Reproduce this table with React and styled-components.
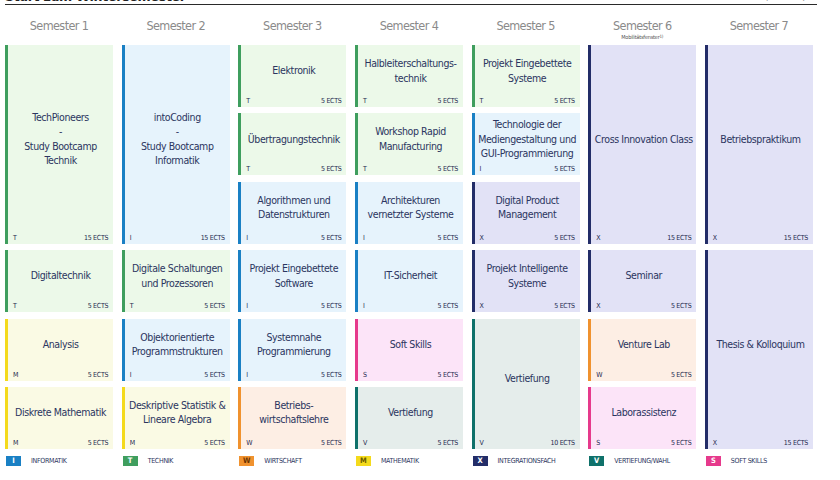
import React from "react";
import styled, { createGlobalStyle } from "styled-components";

const FONT = `"DejaVu Sans Condensed", "DejaVu Sans", "Liberation Sans", sans-serif`;

const GlobalStyle = createGlobalStyle`
  html, body { margin: 0; padding: 0; background: #ffffff; }
  body { font-family: ${FONT}; color: #2b3560; }
  * { box-sizing: border-box; }
`;

const CATS = {
  I: { border: "#1a80c4", bg: "#e6f3fc", label: "INFORMATIK", fg: "#ffffff" },
  T: { border: "#3f9e5e", bg: "#ecf9e9", label: "TECHNIK", fg: "#ffffff" },
  W: { border: "#f0922f", bg: "#fdeee4", label: "WIRTSCHAFT", fg: "#6a3300" },
  M: { border: "#f4da1c", bg: "#fafae4", label: "MATHEMATIK", fg: "#6a5a00" },
  X: { border: "#232d68", bg: "#e2e2f6", label: "INTEGRATIONSFACH", fg: "#ffffff" },
  V: { border: "#0f716a", bg: "#e5edeb", label: "VERTIEFUNG/WAHL", fg: "#ffffff" },
  S: { border: "#e63a8c", bg: "#fce4f8", label: "SOFT SKILLS", fg: "#ffffff" },
};

const SEMESTERS = [
  { title: "Semester 1" },
  { title: "Semester 2" },
  { title: "Semester 3" },
  { title: "Semester 4" },
  { title: "Semester 5" },
  { title: "Semester 6", note: "Mobilitätsfenster", sup: "1)" },
  { title: "Semester 7" },
];

const COURSES = [
  { col: 1, row: 1, span: 3, cat: "T", ects: 15, lines: ["TechPioneers", "-", "Study Bootcamp", "Technik"] },
  { col: 1, row: 4, span: 1, cat: "T", ects: 5, lines: ["Digitaltechnik"] },
  { col: 1, row: 5, span: 1, cat: "M", ects: 5, lines: ["Analysis"] },
  { col: 1, row: 6, span: 1, cat: "M", ects: 5, lines: ["Diskrete Mathematik"] },

  { col: 2, row: 1, span: 3, cat: "I", ects: 15, lines: ["intoCoding", "-", "Study Bootcamp", "Informatik"] },
  { col: 2, row: 4, span: 1, cat: "T", ects: 5, lines: ["Digitale Schaltungen", "und Prozessoren"] },
  { col: 2, row: 5, span: 1, cat: "I", ects: 5, lines: ["Objektorientierte", "Programmstrukturen"] },
  { col: 2, row: 6, span: 1, cat: "M", ects: 5, lines: ["Deskriptive Statistik &", "Lineare Algebra"] },

  { col: 3, row: 1, span: 1, cat: "T", ects: 5, lines: ["Elektronik"] },
  { col: 3, row: 2, span: 1, cat: "T", ects: 5, lines: ["Übertragungstechnik"] },
  { col: 3, row: 3, span: 1, cat: "I", ects: 5, lines: ["Algorithmen und", "Datenstrukturen"] },
  { col: 3, row: 4, span: 1, cat: "I", ects: 5, lines: ["Projekt Eingebettete", "Software"] },
  { col: 3, row: 5, span: 1, cat: "I", ects: 5, lines: ["Systemnahe", "Programmierung"] },
  { col: 3, row: 6, span: 1, cat: "W", ects: 5, lines: ["Betriebs-", "wirtschaftslehre"] },

  { col: 4, row: 1, span: 1, cat: "T", ects: 5, lines: ["Halbleiterschaltungs-", "technik"] },
  { col: 4, row: 2, span: 1, cat: "T", ects: 5, lines: ["Workshop Rapid", "Manufacturing"] },
  { col: 4, row: 3, span: 1, cat: "I", ects: 5, lines: ["Architekturen", "vernetzter Systeme"] },
  { col: 4, row: 4, span: 1, cat: "I", ects: 5, lines: ["IT-Sicherheit"] },
  { col: 4, row: 5, span: 1, cat: "S", ects: 5, lines: ["Soft Skills"] },
  { col: 4, row: 6, span: 1, cat: "V", ects: 5, lines: ["Vertiefung"] },

  { col: 5, row: 1, span: 1, cat: "T", ects: 5, lines: ["Projekt Eingebettete", "Systeme"] },
  { col: 5, row: 2, span: 1, cat: "I", ects: 5, lines: ["Technologie der", "Mediengestaltung und", "GUI-Programmierung"] },
  { col: 5, row: 3, span: 1, cat: "X", ects: 5, lines: ["Digital Product", "Management"] },
  { col: 5, row: 4, span: 1, cat: "X", ects: 5, lines: ["Projekt Intelligente", "Systeme"] },
  { col: 5, row: 5, span: 2, cat: "V", ects: 10, lines: ["Vertiefung"] },

  { col: 6, row: 1, span: 3, cat: "X", ects: 15, lines: ["Cross Innovation Class"] },
  { col: 6, row: 4, span: 1, cat: "X", ects: 5, lines: ["Seminar"] },
  { col: 6, row: 5, span: 1, cat: "W", ects: 5, lines: ["Venture Lab"] },
  { col: 6, row: 6, span: 1, cat: "S", ects: 5, lines: ["Laborassistenz"] },

  { col: 7, row: 1, span: 3, cat: "X", ects: 15, lines: ["Betriebspraktikum"] },
  { col: 7, row: 4, span: 3, cat: "X", ects: 15, lines: ["Thesis & Kolloquium"] },
];

const LEGEND = ["I", "T", "W", "M", "X", "V", "S"];

const Page = styled.div`
  width: 840px;
  height: 480px;
  overflow: hidden;
  padding: 0 0 0 5px;
`;

const TopBar = styled.div`
  display: flex;
  justify-content: space-between;
  align-items: flex-end;
  width: 812px;
  margin-top: -12px;
  height: 17px;
  border-bottom: 1px solid #2a2a2a;
  overflow: hidden;
`;

const Title = styled.div`
  font-size: 14px;
  line-height: 16px;
  font-weight: bold;
  color: #222;
  letter-spacing: -0.3px;
`;

const Stamp = styled.div`
  font-size: 7px;
  line-height: 14px;
  font-weight: bold;
  color: #444;
  letter-spacing: -0.2px;
`;

const Columns = styled.div`
  display: grid;
  width: 808px;
  grid-template-columns: repeat(7, minmax(0, 1fr));
  column-gap: 8.5px;
`;

const HeaderRow = styled(Columns)`
  height: 40px;
`;

const HeaderCell = styled.div`
  display: flex;
  flex-direction: column;
  align-items: center;
  padding-top: 13px;
`;

const SemTitle = styled.div`
  font-size: 12.5px;
  line-height: 16px;
  color: #8a8a8a;
  letter-spacing: -0.6px;
`;

const SemNote = styled.div`
  font-size: 5.5px;
  line-height: 7px;
  color: #555;
  letter-spacing: -0.2px;
  sup {
    font-size: 4.5px;
    vertical-align: top;
    line-height: 5px;
  }
`;

const CardGrid = styled(Columns)`
  grid-template-rows: repeat(6, 62px);
  row-gap: 6.4px;
`;

const Card = styled.div`
  grid-column: ${(p) => p.$col};
  grid-row: ${(p) => p.$row} / span ${(p) => p.$span};
  display: flex;
  flex-direction: column;
  min-width: 0;
  background: ${(p) => CATS[p.$cat].bg};
  border-left: 3px solid ${(p) => CATS[p.$cat].border};
  padding: 0 5px 1px 5px;
`;

const CardTitle = styled.div`
  flex: 1;
  display: flex;
  flex-direction: column;
  align-items: center;
  justify-content: center;
  text-align: center;
  font-size: 10.5px;
  line-height: 14.5px;
  letter-spacing: -0.4px;
  color: #2b3560;
  white-space: nowrap;
`;

const CardFooter = styled.div`
  display: flex;
  justify-content: space-between;
  align-items: center;
  height: 10px;
  font-size: 7px;
  line-height: 10px;
  letter-spacing: -0.3px;
  color: #1f2a4f;
`;

const LegendRow = styled(Columns)`
  margin-top: 6px;
  height: 12px;
`;

const LegendItem = styled.div`
  display: flex;
  align-items: center;
  gap: 10px;
`;

const LegendBox = styled.div`
  width: 15px;
  height: 10px;
  margin-left: 1px;
  background: ${(p) => CATS[p.$cat].border};
  color: ${(p) => CATS[p.$cat].fg};
  font-size: 7.5px;
  line-height: 10px;
  text-align: center;
  font-weight: bold;
`;

const LegendLabel = styled.div`
  font-size: 7px;
  line-height: 10px;
  color: #2b3560;
  letter-spacing: -0.3px;
`;

export default function App() {
  return (
    <Page>
      <GlobalStyle />
      <TopBar>
        <Title>Start zum Wintersemester</Title>
        <Stamp>Stand: 01.07.2021 | Semesterplan</Stamp>
      </TopBar>
      <HeaderRow>
        {SEMESTERS.map((s) => (
          <HeaderCell key={s.title}>
            <SemTitle>{s.title}</SemTitle>
            {s.note && (
              <SemNote>
                {s.note}
                <sup>{s.sup}</sup>
              </SemNote>
            )}
          </HeaderCell>
        ))}
      </HeaderRow>
      <CardGrid>
        {COURSES.map((c, i) => (
          <Card key={i} $col={c.col} $row={c.row} $span={c.span} $cat={c.cat}>
            <CardTitle>
              {c.lines.map((l, j) => (
                <span key={j}>{l}</span>
              ))}
            </CardTitle>
            <CardFooter>
              <span>{c.cat}</span>
              <span>{c.ects} ECTS</span>
            </CardFooter>
          </Card>
        ))}
      </CardGrid>
      <LegendRow>
        {LEGEND.map((k) => (
          <LegendItem key={k}>
            <LegendBox $cat={k}>{k}</LegendBox>
            <LegendLabel>{CATS[k].label}</LegendLabel>
          </LegendItem>
        ))}
      </LegendRow>
    </Page>
  );
}
